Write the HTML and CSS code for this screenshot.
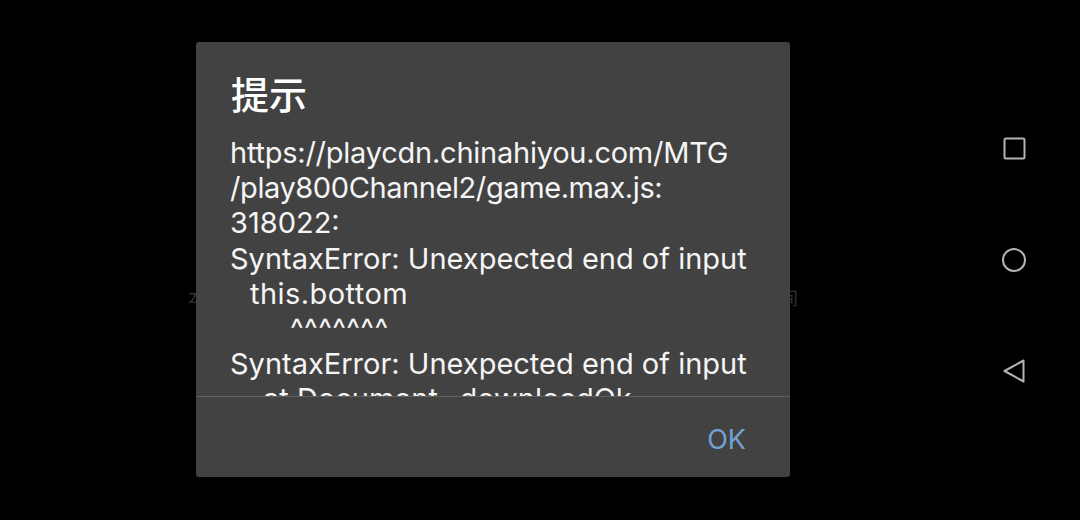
FILE: index.html
```html
<!DOCTYPE html>
<html lang="zh">
<head>
    <meta charset="UTF-8">
    <title>提示</title>
    <link rel="stylesheet" href="styles.css">
</head>
<body>
    <div class="screen">
        <div class="stage">
            <p class="loading-text"><span>本</span><span>间</span></p>
            <div class="dialog">
                <h1 class="dialog-title">提示</h1>
                <div class="dialog-body">
                    <div class="message-line line-url">https://playcdn.chinahiyou.com/MTG</div>
                    <div class="message-line line-path">/play800Channel2/game.max.js:</div>
                    <div class="message-line">318022:</div>
                    <div class="message-line">SyntaxError: Unexpected end of input</div>
                    <div class="message-line line-source">this.bottom</div>
                    <div class="message-line line-carets">^^^^^^^</div>
                    <div class="message-line">SyntaxError: Unexpected end of input</div>
                    <div class="message-line line-stack">at Document._downloadOk</div>
                </div>
                <div class="dialog-footer">
                    <span class="dialog-button">OK</span>
                </div>
            </div>
        </div>
        <nav class="nav-bar">
            <svg class="nav-icon" viewBox="0 0 24 24"><rect x="2.5" y="1.5" width="20" height="20" rx="1.5"/></svg>
            <svg class="nav-icon" viewBox="0 0 24 24"><circle cx="12" cy="12" r="11"/></svg>
            <svg class="nav-icon" viewBox="0 0 24 24"><path d="M21.5 1.5 L2.5 12 L21.5 22.5 Z"/></svg>
        </nav>
    </div>
</body>
</html>
```

FILE: styles.css
```css
* {
    margin: 0;
    padding: 0;
    box-sizing: border-box;
}

body {
    background-color: #000;
    font-family: 'Inter', 'Noto Sans CJK SC', sans-serif;
    overflow: hidden;
}

.screen {
    display: flex;
    width: 1080px;
    height: 520px;
}

.stage {
    position: relative;
    display: flex;
    justify-content: center;
    width: 986px;
    padding: 42px 0 0 0;
}

.loading-text {
    position: absolute;
    top: 284px;
    left: 188px;
    width: 610px;
    display: flex;
    justify-content: space-between;
    font-family: 'Noto Sans CJK SC', sans-serif;
    font-size: 18px;
    color: #333;
}

.dialog {
    position: relative;
    width: 594px;
    height: 435px;
    background-color: #424242;
    border-radius: 3px;
    display: flex;
    flex-direction: column;
}

.dialog-title {
    padding: 27px 35px 0;
    height: 93px;
    font-family: 'Noto Sans CJK SC', sans-serif;
    font-size: 38px;
    font-weight: 500;
    line-height: 48px;
    color: #fff;
}

.dialog-body {
    height: 261px;
    overflow: hidden;
    padding: 0 34px;
}

.message-line {
    font-size: 29px;
    line-height: 35.2px;
    color: #f5f5f5;
    white-space: nowrap;
}

.line-url {
    letter-spacing: -0.24px;
}

.line-path {
    letter-spacing: -0.41px;
}

.line-source {
    padding-left: 20px;
    letter-spacing: 0.45px;
}

.line-carets {
    padding-left: 60px;
    letter-spacing: 0.4px;
}

.line-stack {
    padding-left: 33px;
}

.dialog-footer {
    flex: 1;
    display: flex;
    justify-content: flex-end;
    align-items: center;
    padding: 5px 44px 0 0;
    border-top: 1px solid #5f5f5f;
}

.dialog-button {
    font-size: 27px;
    color: #73a1d2;
}

.nav-bar {
    width: 56px;
    display: flex;
    flex-direction: column;
    align-items: center;
    gap: 87px;
    padding: 137px 0 0 0;
}

.nav-icon {
    width: 24px;
    height: 24px;
    fill: none;
    stroke: #b4b4b4;
    stroke-width: 2;
    stroke-linejoin: round;
}
```
